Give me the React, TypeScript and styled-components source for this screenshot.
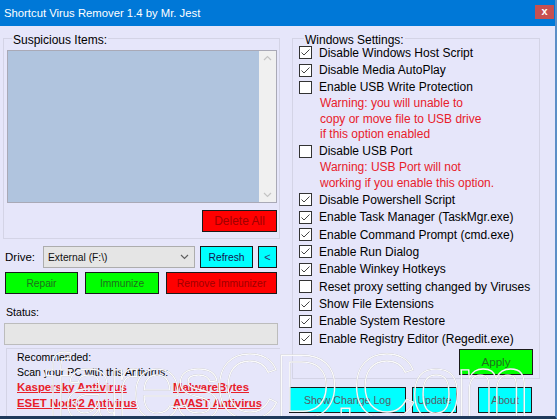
import styled, { createGlobalStyle } from 'styled-components';

const GlobalStyle = createGlobalStyle`
  html, body { margin: 0; padding: 0; }
  body {
    font-family: "Liberation Sans", Arial, sans-serif;
    font-size: 12px;
    color: #000;
    background: #e6e6fa;
  }
`;

const Window = styled.div`
  position: relative;
  width: 557px;
  height: 419px;
  box-sizing: border-box;
  overflow: hidden;
  background: #e6e6fa;
  border-right: 2px solid #5b8fc7;
  border-bottom: 3px solid #1f3a5c;
  display: flex;
  flex-direction: column;
`;

const TitleBar = styled.div`
  height: 26px;
  flex: none;
  background: #0078d7;
  color: #fff;
  display: flex;
  align-items: center;
  justify-content: space-between;
  padding: 0 1px 0 4px;
  font-size: 11.3px;
`;

const CloseBox = styled.div`
  width: 19px;
  height: 14px;
  margin-top: -3px;
  background: #c75050;
  color: #fff;
  font-size: 11px;
  font-weight: bold;
  line-height: 13px;
  text-align: center;
`;

const Body = styled.div`
  flex: 1;
  display: flex;
  padding-left: 3px;
`;

const LeftCol = styled.div`
  width: 277px;
  display: flex;
  flex-direction: column;
`;

const RightCol = styled.div`
  margin-left: 9px;
  width: 251px;
  display: flex;
  flex-direction: column;
`;

const Group = styled.fieldset<{ $pad: string }>`
  margin: 6px 0 0;
  min-width: 0;
  border: 1px solid #d4d4e6;
  padding: ${({ $pad }) => $pad};
  display: flex;
  flex-direction: column;
`;

const Caption = styled.legend`
  padding: 4px 1px 0;
  margin-left: 5px;
  line-height: 8px;
  height: 12px;
  box-sizing: border-box;
`;

const ListBox = styled.div`
  height: 153px;
  box-sizing: border-box;
  border: 1px solid #a9a9b6;
  display: flex;
`;

const ListArea = styled.div`
  flex: 1;
  background: #b0c4de;
`;

const ScrollTrack = styled.div`
  width: 17px;
  background: #f0f0f0;
  display: flex;
  flex-direction: column;
  justify-content: space-between;
  align-items: center;
  padding: 4px 0;
  color: #c4c4c4;
`;

const Btn = styled.div<{ $bg: string; $fg: string; $w: number; $h?: number; $fs?: number }>`
  width: ${({ $w }) => $w}px;
  height: ${({ $h }) => $h ?? 22}px;
  box-sizing: border-box;
  background: ${({ $bg }) => $bg};
  color: ${({ $fg }) => $fg};
  border: 1px solid #1a1a1a;
  display: flex;
  align-items: center;
  justify-content: center;
  white-space: nowrap;
  font-size: ${({ $fs }) => $fs ?? 12}px;
`;

const RightAlign = styled.div`
  display: flex;
  justify-content: flex-end;
  margin-top: 7px;
`;

const Row = styled.div<{ $top: number }>`
  display: flex;
  align-items: center;
  margin-top: ${({ $top }) => $top}px;
`;

const DriveLabel = styled.span`
  width: 38px;
  padding-left: 2px;
  font-size: 11.5px;
`;

const Combo = styled.div`
  width: 152px;
  height: 22px;
  box-sizing: border-box;
  background: #e5e5e5;
  border: 1px solid #adadad;
  display: flex;
  align-items: center;
  justify-content: space-between;
  padding: 0 5px 0 4px;
  margin-right: 5px;
  font-size: 10.3px;
  color: #111;
`;

const StatusLabel = styled.div`
  margin-top: 11px;
  padding-left: 3px;
  line-height: 14px;
  font-size: 10.6px;
`;

const StatusBox = styled.div`
  margin: 4px 2px 0 1px;
  height: 22px;
  box-sizing: border-box;
  background: #e6e6e6;
  border: 1px solid #bcbcbc;
`;

const Recommend = styled.div`
  margin: 3px 0 0 3px;
  padding: 1px 0 0 10px;
  flex: 1;
  border-left: 1px solid #d4d4e6;
  border-top: 1px solid #d4d4e6;
  line-height: 15px;
  font-size: 10.5px;
`;

const LinkGrid = styled.div`
  display: grid;
  grid-template-columns: 156px auto;
  row-gap: 1px;
`;

const AvLink = styled.a`
  color: #e8202a;
  font-weight: bold;
  font-size: 11.4px;
  text-decoration: underline;
  line-height: 15px;
`;

const CheckRow = styled.div`
  height: 17.4px;
  display: flex;
  align-items: center;
  gap: 7px;
  white-space: nowrap;
`;

const Box = styled.span`
  width: 13px;
  height: 13px;
  box-sizing: border-box;
  background: #fff;
  border: 1px solid #333;
  display: flex;
  align-items: center;
  justify-content: center;
`;

const Warning = styled.div`
  color: #e8202a;
  line-height: 15.5px;
  padding-left: 21px;
  white-space: nowrap;
`;

const ApplyRow = styled.div`
  display: flex;
  justify-content: flex-end;
  margin-top: 1px;
`;

const BottomBar = styled.div`
  display: flex;
  margin-top: 8px;
`;

const Watermark = styled.div`
  position: absolute;
  left: 45px;
  top: 342px;
  font-family: "Liberation Sans", Arial, sans-serif;
  font-size: 90px;
  letter-spacing: -6px;
  line-height: 90px;
  color: transparent;
  -webkit-text-stroke: 1.4px rgba(255, 255, 255, 0.95);
  filter: drop-shadow(0 0 0.5px rgba(90, 90, 90, 0.55));
  pointer-events: none;
  white-space: nowrap;
`;

const Chevron = ({ up }: { up?: boolean }) => (
  <svg width="9" height="6" viewBox="0 0 9 6">
    <path
      d={up ? 'M1 5 L4.5 1.5 L8 5' : 'M1 1 L4.5 4.5 L8 1'}
      fill="none"
      stroke="currentColor"
      strokeWidth="1.2"
    />
  </svg>
);

const Check = ({ on, label }: { on: boolean; label: string }) => (
  <CheckRow>
    <Box>
      {on && (
        <svg width="11" height="11" viewBox="0 0 11 11">
          <path d="M1.5 5.5 L4 8 L9.5 2.5" fill="none" stroke="#444" strokeWidth="1" />
        </svg>
      )}
    </Box>
    <span>{label}</span>
  </CheckRow>
);

export default function App() {
  return (
    <>
      <GlobalStyle />
      <Window>
        <TitleBar>
          <span>Shortcut Virus Remover 1.4 by Mr. Jest</span>
          <CloseBox>x</CloseBox>
        </TitleBar>
        <Body>
          <LeftCol>
            <Group $pad="6px 2px 6px 3px">
              <Caption>Suspicious Items:</Caption>
              <ListBox>
                <ListArea />
                <ScrollTrack>
                  <Chevron up />
                  <Chevron />
                </ScrollTrack>
              </ListBox>
              <RightAlign>
                <Btn $bg="#ff0000" $fg="#a00000" $w={75}>Delete All</Btn>
              </RightAlign>
            </Group>
            <Row $top={7}>
              <DriveLabel>Drive:</DriveLabel>
              <Combo>
                <span>External (F:\)</span>
                <span style={{ color: '#606060', display: 'flex' }}><Chevron /></span>
              </Combo>
              <Btn $bg="#00ffff" $fg="#141450" $w={53} $fs={10.3}>Refresh</Btn>
              <span style={{ width: 5 }} />
              <Btn $bg="#00ffff" $fg="#303070" $w={19} $fs={11}>&lt;</Btn>
            </Row>
            <Row $top={4} style={{ paddingLeft: 2, gap: 7 }}>
              <Btn $bg="#00ff00" $fg="#1e701e" $w={73} $fs={10.2}>Repair</Btn>
              <Btn $bg="#00ff00" $fg="#1e701e" $w={74} $fs={10.2}>Immunize</Btn>
              <Btn $bg="#ff0000" $fg="#a00000" $w={111} $fs={10.3}>Remove Immunizer</Btn>
            </Row>
            <StatusLabel>Status:</StatusLabel>
            <StatusBox />
            <Recommend>
              <div>Recommended:</div>
              <div>Scan your PC with this Antivirus:</div>
              <LinkGrid>
                <AvLink href="#">Kaspersky Antivirus</AvLink>
                <AvLink href="#">MalwareBytes</AvLink>
                <AvLink href="#">ESET Nod32 Antivirus</AvLink>
                <AvLink href="#">AVAST Antivirus</AvLink>
              </LinkGrid>
            </Recommend>
          </LeftCol>
          <RightCol>
            <Group $pad="0 6px 3px 6px" style={{ marginLeft: 3 }}>
              <Caption>Windows Settings:</Caption>
              <Check on label="Disable Windows Host Script" />
              <Check on label="Disable Media AutoPlay" />
              <Check on={false} label="Enable USB Write Protection" />
              <Warning>Warning: you will unable to</Warning>
              <Warning>copy or move file to USB drive</Warning>
              <Warning>if this option enabled</Warning>
              <Check on={false} label="Disable USB Port" />
              <Warning>Warning: USB Port will not</Warning>
              <Warning>working if you enable this option.</Warning>
              <Check on label="Disable Powershell Script" />
              <Check on label="Enable Task Manager (TaskMgr.exe)" />
              <Check on label="Enable Command Prompt (cmd.exe)" />
              <Check on label="Enable Run Dialog" />
              <Check on label="Enable Winkey Hotkeys" />
              <Check on={false} label="Reset proxy setting changed by Viruses" />
              <Check on label="Show File Extensions" />
              <Check on label="Enable System Restore" />
              <Check on label="Enable Registry Editor (Regedit.exe)" />
              <ApplyRow>
                <Btn $bg="#00ff00" $fg="#1e701e" $w={74} $h={26} $fs={11.6}>Apply</Btn>
              </ApplyRow>
            </Group>
            <BottomBar>
              <Btn $bg="#00ffff" $fg="#5a5a66" $w={117} $h={26} $fs={10.6}>Show Change Log</Btn>
              <span style={{ width: 6 }} />
              <Btn $bg="#00ffff" $fg="#5a5a66" $w={45} $h={26} $fs={10.6}>Update</Btn>
              <span style={{ width: 21 }} />
              <Btn $bg="#00ffff" $fg="#5a5a66" $w={54} $h={26} $fs={10.6}>About</Btn>
            </BottomBar>
          </RightCol>
        </Body>
        <Watermark>faresCD.Com</Watermark>
      </Window>
    </>
  );
}
